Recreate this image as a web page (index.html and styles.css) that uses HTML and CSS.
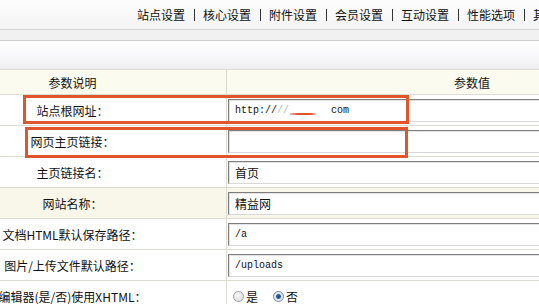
FILE: index.html
```html
<!DOCTYPE html>
<html lang="zh-CN">

<head>
    <meta charset="UTF-8">
    <meta name="viewport" content="width=device-width, initial-scale=1.0">
    <title>系统基本参数</title>
    <link rel="stylesheet" href="styles.css">
</head>

<body>
    <div class="page">
        <!-- 顶部设置分类 -->
        <div class="topnav">
            <span class="nav-item">站点设置</span><span class="sep"></span>
            <span class="nav-item">核心设置</span><span class="sep"></span>
            <span class="nav-item">附件设置</span><span class="sep"></span>
            <span class="nav-item">会员设置</span><span class="sep"></span>
            <span class="nav-item">互动设置</span><span class="sep"></span>
            <span class="nav-item">性能选项</span><span class="sep"></span>
            <span class="nav-item">其它选项</span>
        </div>
        <div class="subbar"></div>
        <div class="titlebar"></div>

        <!-- 参数表 -->
        <table class="config-table">
            <tr class="head">
                <td class="label">参数说明</td>
                <td class="value-head">参数值</td>
            </tr>
            <tr>
                <td class="label">站点根网址：</td>
                <td class="value">
                    <div class="field mono">http://<span class="faint">//</span><span class="smudge"></span><span class="after">com</span></div>
                </td>
            </tr>
            <tr>
                <td class="label">网页主页链接：</td>
                <td class="value"><div class="field"></div></td>
            </tr>
            <tr>
                <td class="label">主页链接名：</td>
                <td class="value"><div class="field">首页</div></td>
            </tr>
            <tr class="alt">
                <td class="label">网站名称：</td>
                <td class="value"><div class="field">精益网</div></td>
            </tr>
            <tr>
                <td class="label">文档HTML默认保存路径：</td>
                <td class="value"><div class="field mono">/a</div></td>
            </tr>
            <tr>
                <td class="label">图片/上传文件默认路径：</td>
                <td class="value"><div class="field mono">/uploads</div></td>
            </tr>
            <tr>
                <td class="label">编辑器(是/否)使用XHTML：</td>
                <td class="value">
                    <div class="radios">
                        <span class="radio"></span><span class="radio-text">是</span>
                        <span class="radio checked"></span><span class="radio-text">否</span>
                    </div>
                </td>
            </tr>
        </table>

        <!-- 标注框 -->
        <div class="mark mark-one"></div>
        <div class="mark mark-two"></div>
    </div>
</body>

</html>
```

FILE: styles.css
```css
body {
    margin: 0;
    overflow: hidden;
    font-family: "Noto Sans CJK SC", sans-serif;
    font-size: 12px;
    color: #111;
    background-color: #ffffff;
}

.page {
    position: relative;
    width: 539px;
    height: 304px;
    overflow: hidden;
}

.topnav {
    display: flex;
    align-items: center;
    height: 29px;
    padding-left: 137px;
    white-space: nowrap;
    background: linear-gradient(#fdfdfd, #f4f4f4);
    border-bottom: 1px solid #d6d6d6;
}

.nav-item {
    flex: none;
    width: 48px;
    line-height: 14px;
}

.sep {
    flex: none;
    width: 1px;
    height: 12px;
    margin: 0 8px 0 9px;
    background-color: #333;
}

.subbar {
    height: 10px;
    background-color: #f1f1f1;
    border-bottom: 1px solid #cfcfcf;
}

.titlebar {
    height: 28px;
    background: linear-gradient(#ffffff, #f5f5f8 70%, #eeeef2);
}

.config-table {
    margin-left: -82px;
    width: 800px;
    border-collapse: collapse;
    table-layout: fixed;
}

.config-table td {
    border: 1px solid #dcdcd2;
    padding: 0;
    vertical-align: middle;
}

.config-table tr {
    height: 31px;
}

.config-table tr.head {
    height: 25px;
    background-color: #fbfbef;
}

.config-table tr.alt {
    background-color: #f8f7ea;
}

.label {
    width: 307px;
    text-align: center;
    white-space: nowrap;
}

.value-head {
    text-align: center;
}

.value {
    padding: 0 0 0 1px;
}

.field {
    height: 21px;
    margin: 0 0 0 1px;
    padding: 0 6px;
    line-height: 21px;
    white-space: nowrap;
    background-color: #ffffff;
    border: 1px solid;
    border-color: #7d7d7d #cfcfcf #d8d8d8 #7d7d7d;
    box-shadow: inset 1px 1px 0 #e4e4e4;
}

.mono {
    font-family: "Liberation Mono", monospace;
    font-size: 10px;
}

.faint {
    color: #b8b8b8;
}

.smudge {
    display: inline-block;
    width: 26px;
    height: 2px;
    margin: 0 15px 0 1px;
    vertical-align: -2px;
    background: linear-gradient(90deg, #f2b9a4, #e0552c 30%, #e0552c 80%, #f5cdbf);
}

.radios {
    display: flex;
    align-items: center;
    height: 22px;
    padding-left: 6px;
}

.radio {
    width: 11px;
    height: 11px;
    box-sizing: border-box;
    border-radius: 50%;
    border: 1px solid #a2a2a2;
    background: radial-gradient(circle at 40% 35%, #fafafa, #d6d6d6);
}

.radio.checked {
    border-color: #7d8ea6;
    background: radial-gradient(circle, #1f4f86 0, #2f5f96 2px, #e4ebf3 3px, #cfd8e2 100%);
}

.radio-text {
    margin: 0 15px 0 2px;
}

.mark {
    position: absolute;
    box-sizing: border-box;
    border: 3px solid #e1552b;
}

.mark-one {
    left: 23px;
    top: 95px;
    width: 386px;
    height: 29px;
}

.mark-two {
    left: 25px;
    top: 127px;
    width: 383px;
    height: 31px;
}
```
